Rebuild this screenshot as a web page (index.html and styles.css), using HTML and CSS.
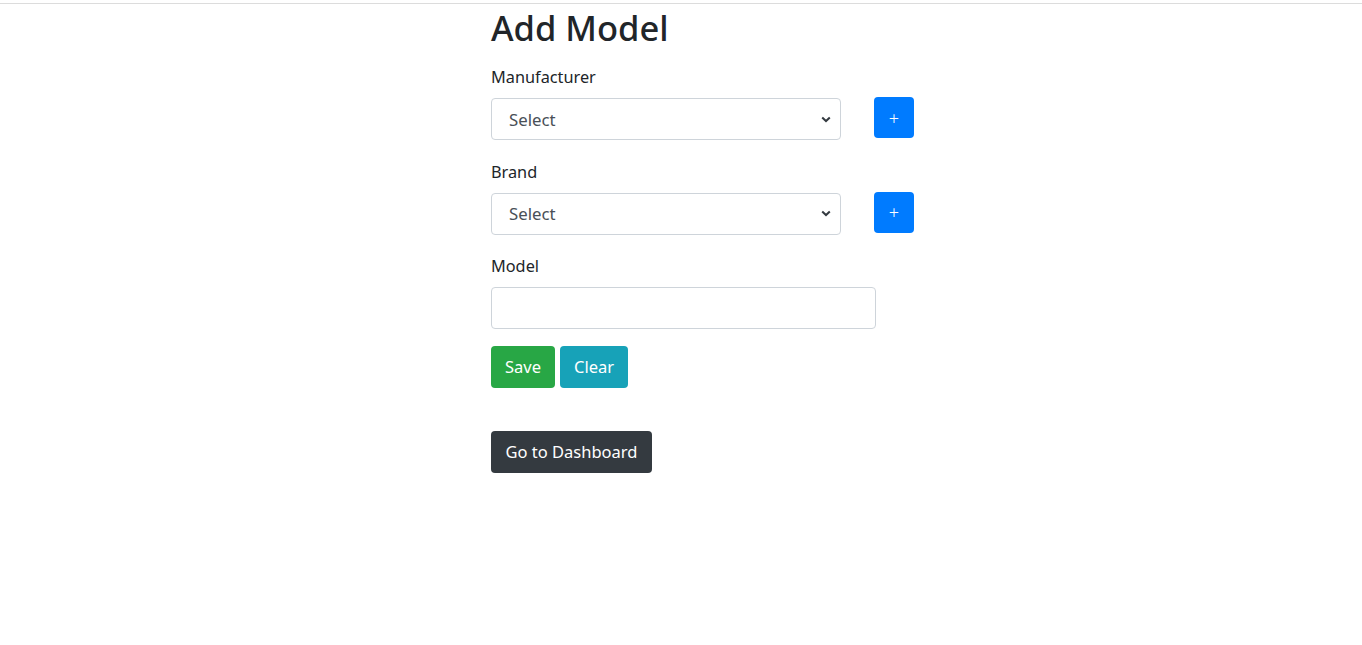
FILE: index.html
```html
<!DOCTYPE html>
<html lang="en">
<head>
<meta charset="utf-8">
<title>Add Model</title>
<link rel="stylesheet" href="styles.css">
</head>
<body>
<div class="topline"></div>
<main class="page">
  <h1 class="title">Add Model</h1>
  <div class="form-group">
    <label class="label">Manufacturer</label>
    <div class="select-row">
      <div class="select">
        <span class="select-text">Select</span>
        <svg class="chevron" width="10" height="7" viewBox="0 0 10 7"><path d="M1.2 1.4 L5 5 L8.8 1.4" fill="none" stroke="#343a40" stroke-width="2"/></svg>
      </div>
      <button class="btn btn-add">+</button>
    </div>
  </div>
  <div class="form-group">
    <label class="label">Brand</label>
    <div class="select-row">
      <div class="select">
        <span class="select-text">Select</span>
        <svg class="chevron" width="10" height="7" viewBox="0 0 10 7"><path d="M1.2 1.4 L5 5 L8.8 1.4" fill="none" stroke="#343a40" stroke-width="2"/></svg>
      </div>
      <button class="btn btn-add">+</button>
    </div>
  </div>
  <div class="form-group form-group-last">
    <label class="label">Model</label>
    <div class="input"></div>
  </div>
  <div class="actions">
    <button class="btn btn-save">Save</button>
    <button class="btn btn-clear">Clear</button>
  </div>
  <div class="dash">
    <button class="btn btn-dark">Go to Dashboard</button>
  </div>
</main>
</body>
</html>
```
FILE: styles.css
```css
html, body {
  margin: 0;
  padding: 0;
  background: #fff;
}
body {
  padding-top: 3px;
  font-family: "Noto Sans", "Open Sans", sans-serif;
  color: #212529;
}
.topline {
  height: 1px;
  background: #dcdcdc;
}
.page {
  padding-left: 491px;
}
.title {
  margin: 0 0 9px 0;
  height: 50px;
  line-height: 48px;
  font-size: 34.5px;
  font-weight: 500;
  color: #212529;
}
.form-group {
  margin-bottom: 17.6px;
}
.form-group-last {
  margin-bottom: 17px;
}
.label {
  display: block;
  font-size: 16.3px;
  line-height: 26.4px;
  padding-top: 1.2px;
  margin-bottom: 7.6px;
}
.select-row {
  display: flex;
  align-items: flex-start;
  gap: 33px;
}
.select {
  box-sizing: border-box;
  width: 350px;
  height: 41.8px;
  border: 1px solid #ced4da;
  border-radius: 4px;
  display: flex;
  align-items: center;
  justify-content: space-between;
  padding: 0 9px 0 17px;
  color: #495057;
  font-size: 16.8px;
}
.chevron {
  display: block;
}
.input {
  box-sizing: border-box;
  width: 385px;
  height: 41.8px;
  border: 1px solid #ced4da;
  border-radius: 4px;
}
.btn {
  font-family: inherit;
  border: none;
  border-radius: 4px;
  color: #fff;
  font-size: 16.5px;
  line-height: 26px;
  padding: 0;
  cursor: pointer;
}
.btn-add {
  width: 40px;
  height: 41px;
  margin-top: -1px;
  background: #007bff;
  font-size: 18px;
  font-weight: 300;
}
.actions {
  display: flex;
  gap: 5px;
}
.btn-save {
  background: #28a745;
  width: 64px;
  height: 42px;
}
.btn-clear {
  background: #17a2b8;
  width: 68px;
  height: 42px;
}
.dash {
  margin-top: 43px;
}
.btn-dark {
  background: #343a40;
  width: 161px;
  height: 42px;
}
```
